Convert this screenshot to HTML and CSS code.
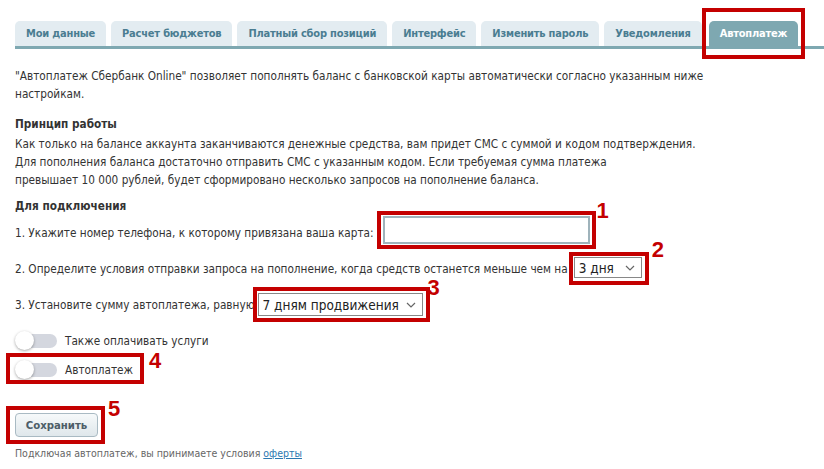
FILE: index.html
```html
<!DOCTYPE html>
<html lang="ru">
<head>
  <meta charset="UTF-8">
  <meta name="viewport" content="width=device-width, initial-scale=1.0">
  <title>Автоплатеж</title>
  <link rel="stylesheet" href="styles.css">
</head>
<body>

<div class="page">
  <ul class="tabs">
    <li class="tab">Мои данные</li>
    <li class="tab">Расчет бюджетов</li>
    <li class="tab">Платный сбор позиций</li>
    <li class="tab">Интерфейс</li>
    <li class="tab">Изменить пароль</li>
    <li class="tab">Уведомления</li>
    <li class="tab tab-active mark mark-tab">Автоплатеж</li>
  </ul>

  <div class="content">
    <p class="intro">"Автоплатеж Сбербанк Online" позволяет пополнять баланс с банковской карты автоматически согласно указанным ниже<br>настройкам.</p>

    <h3 class="title">Принцип работы</h3>
    <p class="text">Как только на балансе аккаунта заканчиваются денежные средства, вам придет СМС с суммой и кодом подтверждения.<br>Для пополнения баланса достаточно отправить СМС с указанным кодом. Если требуемая сумма платежа<br>превышает 10&nbsp;000 рублей, будет сформировано несколько запросов на пополнение баланса.</p>

    <h3 class="title title-connect">Для подключения</h3>

    <div class="row row-phone">
      <span class="label">1. Укажите номер телефона, к которому привязана ваша карта:</span>
      <span class="mark mark-phone"><input class="field" type="text"><b class="num">1</b></span>
    </div>

    <div class="row row-days">
      <span class="label">2. Определите условия отправки запроса на пополнение, когда средств останется меньше чем на</span>
      <span class="mark mark-days">
        <span class="select-wrap select-days">
          <select class="select"><option>3 дня</option></select>
          <svg class="chevron" width="10" height="6" viewBox="0 0 10 6"><path d="M1 1l4 4 4-4" fill="none" stroke="#666" stroke-width="1.2"/></svg>
        </span>
        <b class="num">2</b>
      </span>
    </div>

    <div class="row row-sum">
      <span class="label">3. Установите сумму автоплатежа, равную</span>
      <span class="mark mark-sum">
        <span class="select-wrap select-sum">
          <select class="select"><option>7 дням продвижения</option></select>
          <svg class="chevron" width="10" height="6" viewBox="0 0 10 6"><path d="M1 1l4 4 4-4" fill="none" stroke="#666" stroke-width="1.2"/></svg>
        </span>
        <b class="num">3</b>
      </span>
    </div>

    <label class="switch switch-first">
      <span class="track"><span class="knob"></span></span>
      Также оплачивать услуги
    </label>

    <div class="switch-row">
      <label class="switch mark mark-switch">
        <span class="track"><span class="knob"></span></span>
        Автоплатеж
        <b class="num">4</b>
      </label>
    </div>

    <div class="save-row">
      <span class="mark mark-save"><button class="save-btn">Сохранить</button><b class="num">5</b></span>
    </div>

    <p class="note">Подключая автоплатеж, вы принимаете условия <a href="#">оферты</a></p>
  </div>
</div>

</body>
</html>
```

FILE: styles.css
```css
body {
  margin: 0;
  background: #fff;
  color: #333;
  font-family: "DejaVu Sans Condensed", "DejaVu Sans", sans-serif;
  font-size: 11.7px;
  line-height: 18px;
}

.page {
  padding: 21px 0 0 15px;
}

/* tabs */
.tabs {
  display: flex;
  gap: 5px;
  margin: 0;
  padding: 0;
  list-style: none;
  border-bottom: 3px solid #7ea8b1;
}

.tab {
  height: 25px;
  line-height: 25px;
  padding: 0 11px;
  background: #e3ecf1;
  border-radius: 5px 5px 0 0;
  color: #4a7d91;
  font-size: 11px;
  font-weight: bold;
  letter-spacing: -0.2px;
  white-space: nowrap;
}

.tab-active {
  margin-left: 2px;
  background: #7ea8b1;
  color: #fff;
}

/* content */
.content {
  padding-top: 18px;
}

.intro,
.text {
  margin: 0;
}

.title {
  margin: 12px 0 2px;
  font-size: 11.7px;
  line-height: 18px;
  font-weight: bold;
}

.title-connect {
  margin-top: 8px;
  margin-bottom: 1px;
}

.row {
  display: flex;
  align-items: center;
}

.row-phone { margin-top: 1px; }
.row-days { margin-top: 13px; }
.row-sum { margin-top: 15px; }

.row-phone .label { margin-right: 9px; padding-top: 5px; }
.row-days .label { margin-right: 6px; padding-top: 3px; }
.row-sum .label { margin-right: 3px; }

.field {
  box-sizing: border-box;
  width: 207px;
  height: 28px;
  margin: 0;
  border: 2px solid #9fb3bb;
  background: #fff;
}

.select-wrap {
  position: relative;
  display: block;
}

.select {
  appearance: none;
  -webkit-appearance: none;
  box-sizing: border-box;
  display: block;
  margin: 0;
  padding: 0 0 0 4px;
  border: 1px solid #888;
  border-radius: 0;
  background: #fff;
  color: #222;
  font-family: "DejaVu Sans Condensed", "DejaVu Sans", sans-serif;
  font-size: 13.5px;
}

.select-days .select { width: 68px; height: 21px; }
.select-sum .select { width: 165px; height: 23px; }

.chevron {
  position: absolute;
  right: 7px;
  top: 50%;
  margin-top: -3px;
  pointer-events: none;
}

/* switches */
.switch {
  display: flex;
  align-items: center;
  height: 20px;
  color: #333;
}

.switch-first { margin-top: 15px; }

.switch-row {
  display: flex;
  margin-top: 9px;
}

.track {
  position: relative;
  width: 41px;
  height: 14px;
  margin: 0 8px 0 1px;
  border-radius: 7px;
  background: #d4d7df;
}

.knob {
  position: absolute;
  left: -1px;
  top: -3px;
  width: 19px;
  height: 19px;
  border-radius: 50%;
  background: #fff;
  box-shadow: 0 1px 3px rgba(0, 0, 0, 0.35);
}

/* save */
.save-row {
  display: flex;
  margin-top: 33px;
}

.save-btn {
  display: block;
  width: 83px;
  height: 24px;
  margin: 0;
  padding: 0;
  border: 1px solid #a9bac3;
  border-radius: 4px;
  background: linear-gradient(#f6f9fa, #dfe7eb);
  color: #4d5d68;
  font-family: "DejaVu Sans Condensed", "DejaVu Sans", sans-serif;
  font-size: 11.3px;
  font-weight: bold;
}

.note {
  margin: 9px 0 0;
  font-size: 10.5px;
  line-height: 14px;
  color: #666;
}

.note a {
  color: #2b78b0;
}

/* annotation marks */
.mark {
  position: relative;
}

.mark::after {
  content: "";
  position: absolute;
  border: 4px solid #c40000;
  pointer-events: none;
}

.num {
  position: absolute;
  color: #c40000;
  font-family: "Liberation Sans", Arial, sans-serif;
  font-size: 22px;
  line-height: 22px;
  font-weight: bold;
}

.mark-tab::after { left: -7px; right: -7px; top: -13px; bottom: -13px; }
.mark-phone::after { left: -6px; right: -6px; top: -5px; bottom: -5px; }
.mark-phone .num { left: calc(100% + 7px); top: -16px; }
.mark-days::after { left: -5px; right: -7px; top: -5px; bottom: -7px; }
.mark-days .num { left: calc(100% + 10px); top: -18px; }
.mark-sum::after { left: -5px; right: -7px; top: -6px; bottom: -6px; }
.mark-sum .num { left: calc(100% + 5px); top: -16px; }
.mark-switch::after { left: -9px; right: -11px; top: -7px; bottom: -4px; }
.mark-switch .num { left: calc(100% + 16px); top: -10px; }
.mark-save::after { left: -9px; right: -7px; top: -7px; bottom: -7px; }
.mark-save .num { left: calc(100% + 10px); top: -15px; }
```
